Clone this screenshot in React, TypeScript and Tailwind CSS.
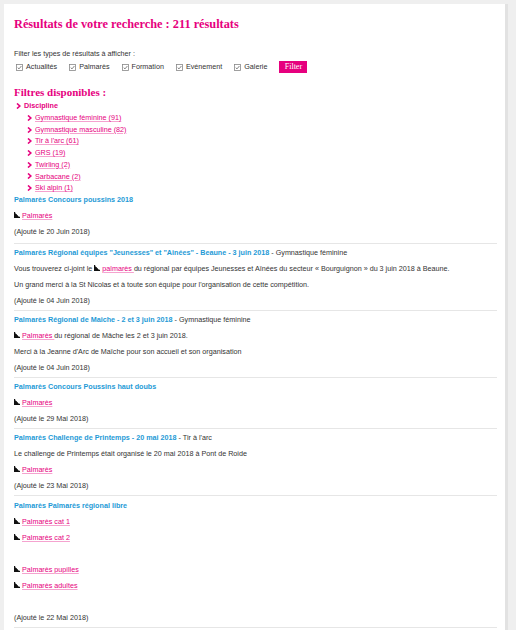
import { Fragment } from "react";

const serif = { fontFamily: '"Liberation Serif", "DejaVu Serif", serif' };

const FileIcon = () => (
  <svg width="6" height="6" viewBox="0 0 6 6" className="inline-block mr-[2px] align-baseline">
    <path d="M0 0 L1.2 0 L1.2 2 L2.6 2 L2.6 3.4 L4 3.4 L4 4.8 L6 4.8 L6 6 L0 6 Z" fill="#111" />
    <path d="M0 0 L6 6 L0 6 Z" fill="#111" />
  </svg>
);

const Chevron = ({ className = "" }: { className?: string }) => (
  <svg width="5" height="6" viewBox="0 0 5 6" className={className}>
    <path d="M1 0.5 L3.8 3 L1 5.5" stroke="#e6007e" strokeWidth="1.6" fill="none" />
  </svg>
);

const CheckBox = () => (
  <svg width="7" height="7" viewBox="0 0 7 7" className="mr-[3px]">
    <rect x="0.5" y="0.5" width="6" height="6" fill="#fff" stroke="#888" strokeWidth="0.8" />
    <path d="M1.7 3.6 L3 4.9 L5.4 2" stroke="#666" strokeWidth="0.8" fill="none" />
  </svg>
);

const Doc = ({ children }: { children: React.ReactNode }) => (
  <a className="text-[#e6007e] underline decoration-[#f5a3cf] underline-offset-1">{children}</a>
);

const disciplines = [
  "Gymnastique féminine (91)",
  "Gymnastique masculine (82)",
  "Tir à l'arc (61)",
  "GRS (19)",
  "Twirling (2)",
  "Sarbacane (2)",
  "Ski alpin (1)",
];

const types = ["Actualités", "Palmarès", "Formation", "Evénement", "Galerie"];

type Result = {
  title: string;
  sport?: string;
  body: React.ReactNode[];
  date: string;
};

const results: Result[] = [
  {
    title: "Palmarès Concours poussins 2018",
    body: [
      <>
        <FileIcon />
        <Doc>Palmarès</Doc>
      </>,
    ],
    date: "20 Juin 2018",
  },
  {
    title: 'Palmarès Régional équipes "Jeunesses" et "Ainées" - Beaune - 3 juin 2018',
    sport: "Gymnastique féminine",
    body: [
      <>
        Vous trouverez ci-joint le <FileIcon />
        <Doc>palmarès </Doc> du régional par équipes Jeunesses et Aînées du secteur « Bourguignon » du 3 juin 2018 à
        Beaune.
      </>,
      <>Un grand merci à la St Nicolas et à toute son équipe pour l'organisation de cette compétition.</>,
    ],
    date: "04 Juin 2018",
  },
  {
    title: "Palmarès Régional de Maiche - 2 et 3 juin 2018",
    sport: "Gymnastique féminine",
    body: [
      <>
        <FileIcon />
        <Doc>Palmarès </Doc> du régional de Mâche les 2 et 3 juin 2018.
      </>,
      <>Merci à la Jeanne d'Arc de Maîche pour son accueil et son organisation</>,
    ],
    date: "04 Juin 2018",
  },
  {
    title: "Palmarès Concours Poussins haut doubs",
    body: [
      <>
        <FileIcon />
        <Doc>Palmarès</Doc>
      </>,
    ],
    date: "29 Mai 2018",
  },
  {
    title: "Palmarès Challenge de Printemps - 20 mai 2018",
    sport: "Tir à l'arc",
    body: [
      <>Le challenge de Printemps était organisé le 20 mai 2018 à Pont de Roide</>,
      <>
        <FileIcon />
        <Doc>Palmarès</Doc>
      </>,
    ],
    date: "23 Mai 2018",
  },
  {
    title: "Palmarès Palmarès régional libre",
    body: [
      <>
        <FileIcon />
        <Doc>Palmarès cat 1</Doc>
      </>,
      <>
        <FileIcon />
        <Doc>Palmarès cat 2</Doc>
      </>,
      <>&nbsp;</>,
      <>
        <FileIcon />
        <Doc>Palmarès pupilles</Doc>
      </>,
      <>
        <FileIcon />
        <Doc>Palmarès adultes</Doc>
      </>,
      <>&nbsp;</>,
    ],
    date: "22 Mai 2018",
  },
];

export default function App() {
  return (
    <div
      className="min-h-[630px] bg-[#efefef] pt-[4px] pl-[4px] pr-[8px] text-[7.2px] leading-[10px] text-[#333]"
      style={{ fontFamily: '"Liberation Sans", Arial, sans-serif' }}
    >
      <div className="w-[504px] bg-white border-r-[3px] border-[#e2e2e2] pl-[10px] pr-[8px] pt-[12px] pb-[4px]">
        <h1 className="text-[12.3px] leading-[16px] font-bold text-[#e6007e]" style={serif}>
          Résultats de votre recherche : 211 résultats
        </h1>

        <div className="mt-[17px]">
          <p>Filter les types de résultats à afficher :</p>
          <div className="flex items-center mt-[2px]">
            {types.map((t) => (
              <label key={t} className="flex items-center ml-[2px] mr-[10px]">
                <CheckBox />
                {t}
              </label>
            ))}
            <button
              className="ml-[2px] w-[28px] h-[12px] bg-[#e6007e] text-white text-[8px] leading-[12px]"
              style={serif}
            >
              Filter
            </button>
          </div>
        </div>

        <h2 className="mt-[12px] text-[11px] leading-[14px] font-bold text-[#e6007e]" style={serif}>
          Filtres disponibles :
        </h2>
        <div className="flex items-center mt-[1px] ml-[2px] font-bold text-[#e6007e] leading-[12px]">
          <Chevron className="mr-[3px]" />
          Discipline
        </div>
        <ul className="ml-[13px]">
          {disciplines.map((d) => (
            <li key={d} className="flex items-center leading-[11.7px]">
              <Chevron className="mr-[3px]" />
              <a className="text-[#e6007e] underline decoration-[#f5a3cf]">{d}</a>
            </li>
          ))}
        </ul>

        <div>
          {results.map((r, i) => (
            <Fragment key={i}>
              <div className="pb-[4px] pt-[4px] first:pt-[1px] first:pb-[6px] last:pt-[5px] border-b border-[#e6e6e6]">
                <p className="leading-[10px]">
                  <span className="font-bold text-[#1e9ad6]">{r.title}</span>
                  {r.sport && <span> - {r.sport}</span>}
                </p>
                {r.body.map((b, j) => (
                  <p key={j} className="mt-[6px] leading-[10px]">
                    {b}
                  </p>
                ))}
                <p className="mt-[6px] leading-[10px]">(Ajouté le {r.date})</p>
              </div>
            </Fragment>
          ))}
        </div>
      </div>
    </div>
  );
}
